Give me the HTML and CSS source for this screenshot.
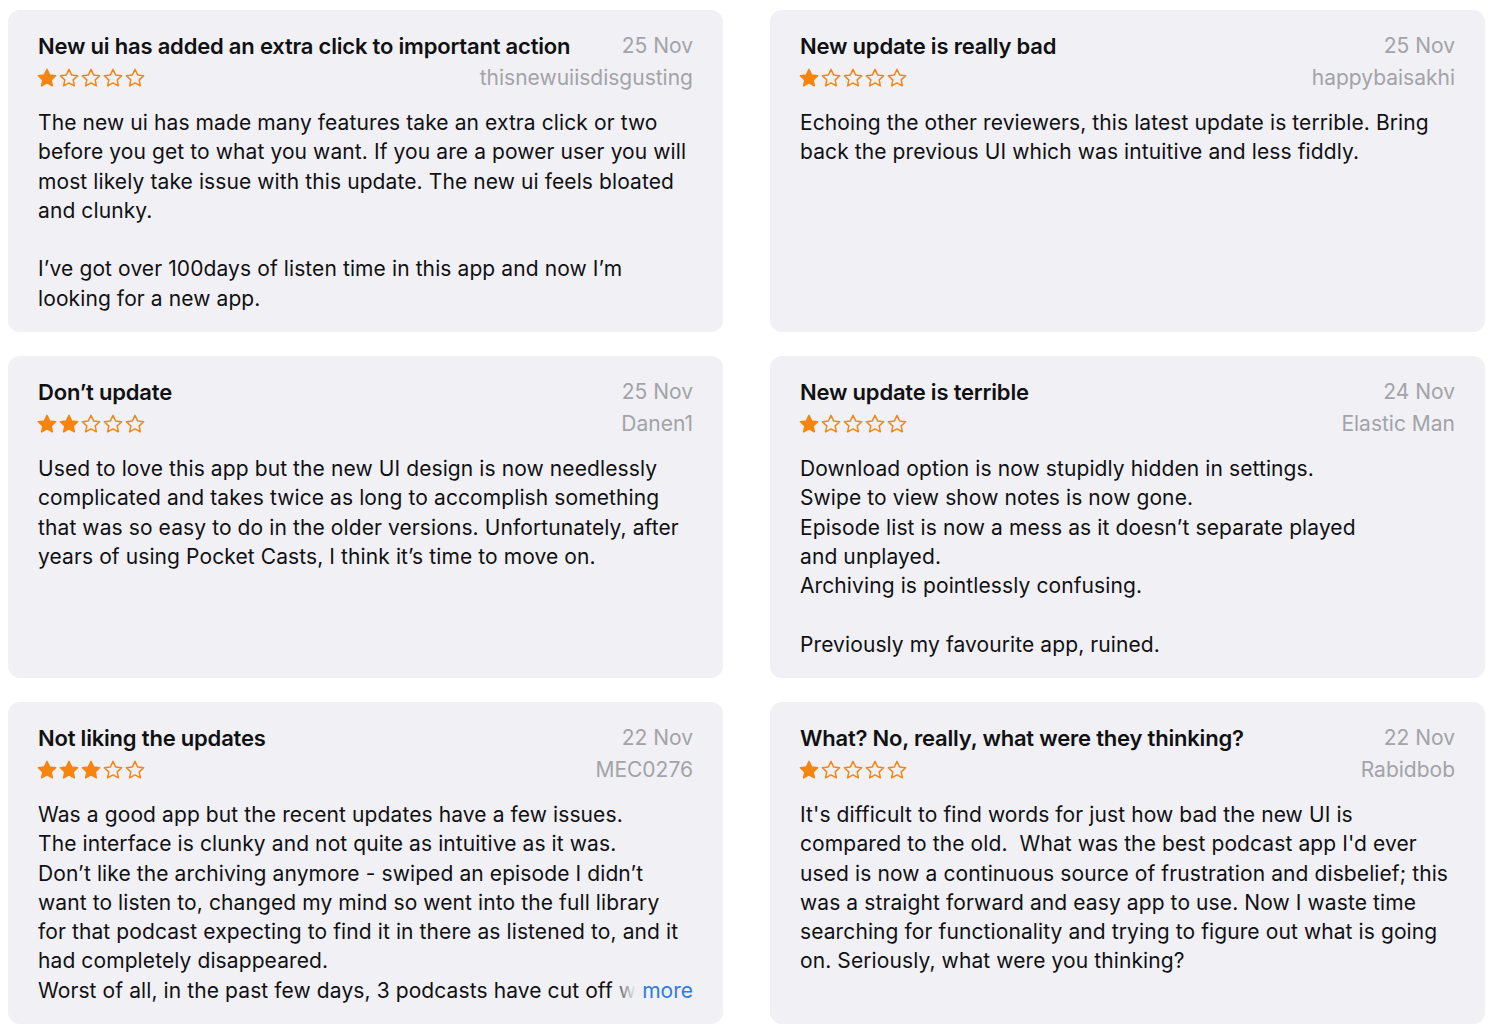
FILE: index.html
```html
<!DOCTYPE html>
<html>
  <head>
    <link rel="stylesheet" href="styles.css">
  </head>
  <body>
    <svg class="defs" width="0" height="0">
      <symbol id="star" viewBox="0 0 24 24">
        <path d="M12 2.6l2.85 6.05 6.6.85-4.85 4.55 1.25 6.55L12 17.4l-5.85 3.2 1.25-6.55L2.55 9.5l6.6-.85z" />
      </symbol>
    </svg>

    <main class="reviews">
      <article class="review">
        <header class="review-head">
          <h2 class="review-title">New ui has added an extra click to important action</h2>
          <span class="review-date">25 Nov</span>
          <div class="stars" data-rating="1"></div>
          <span class="review-author">thisnewuiisdisgusting</span>
        </header>
        <p class="review-body">The new ui has made many features take an extra click or two before you get to what you want. If you are a power user you will most likely take issue with this update. The new ui feels bloated and clunky.<br><br>I’ve got over 100days of listen time in this app and now I’m looking for a new app.</p>
      </article>

      <article class="review">
        <header class="review-head">
          <h2 class="review-title">New update is really bad</h2>
          <span class="review-date">25 Nov</span>
          <div class="stars" data-rating="1"></div>
          <span class="review-author">happybaisakhi</span>
        </header>
        <p class="review-body">Echoing the other reviewers, this latest update is terrible. Bring back the previous UI which was intuitive and less fiddly.</p>
      </article>

      <article class="review">
        <header class="review-head">
          <h2 class="review-title">Don’t update</h2>
          <span class="review-date">25 Nov</span>
          <div class="stars" data-rating="2"></div>
          <span class="review-author">Danen1</span>
        </header>
        <p class="review-body">Used to love this app but the new UI design is now needlessly complicated and takes twice as long to accomplish something that was so easy to do in the older versions. Unfortunately, after years of using Pocket Casts, I think it’s time to move on.</p>
      </article>

      <article class="review">
        <header class="review-head">
          <h2 class="review-title">New update is terrible</h2>
          <span class="review-date">24 Nov</span>
          <div class="stars" data-rating="1"></div>
          <span class="review-author">Elastic Man</span>
        </header>
        <p class="review-body">Download option is now stupidly hidden in settings.<br>Swipe to view show notes is now gone.<br>Episode list is now a mess as it doesn’t separate played<br>and unplayed.<br>Archiving is pointlessly confusing.<br><br>Previously my favourite app, ruined.</p>
      </article>

      <article class="review">
        <header class="review-head">
          <h2 class="review-title">Not liking the updates</h2>
          <span class="review-date">22 Nov</span>
          <div class="stars" data-rating="3"></div>
          <span class="review-author">MEC0276</span>
        </header>
        <div class="review-clamp">
          <p class="review-body">Was a good app but the recent updates have a few issues.<br>The interface is clunky and not quite as intuitive as it was.<br>Don’t like the archiving anymore - swiped an episode I didn’t want to listen to, changed my mind so went into the full library for that podcast expecting to find it in there as listened to, and it had completely disappeared.<br>Worst of all, in the past few days, 3 podcasts have cut off with no warning and I can’t get them back.</p>
          <a class="more" href="#">more</a>
        </div>
      </article>

      <article class="review">
        <header class="review-head">
          <h2 class="review-title">What? No, really, what were they thinking?</h2>
          <span class="review-date">22 Nov</span>
          <div class="stars" data-rating="1"></div>
          <span class="review-author">Rabidbob</span>
        </header>
        <p class="review-body">It's difficult to find words for just how bad the new UI is compared to the old.&nbsp; What was the best podcast app I'd ever used is now a continuous source of frustration and disbelief; this was a straight forward and easy app to use. Now I waste time searching for functionality and trying to figure out what is going on. Seriously, what were you thinking?</p>
      </article>
    </main>

    <script>
      // fill each rating row with five stars, the first n solid
      document.querySelectorAll('.stars').forEach((row) => {
        const rating = parseInt(row.dataset.rating);
        for (let i = 0; i < 5; i++) {
          const svg = document.createElementNS('http://www.w3.org/2000/svg', 'svg');
          svg.setAttribute('class', i < rating ? 'star full' : 'star');
          svg.setAttribute('viewBox', '0 0 24 24');
          const use = document.createElementNS('http://www.w3.org/2000/svg', 'use');
          use.setAttribute('href', '#star');
          svg.appendChild(use);
          row.appendChild(svg);
        }
      });
    </script>
  </body>
</html>
```

FILE: styles.css
```css
body {
  margin: 0;
  padding: 0;
  background-color: #fff;
  font-family: Inter, "Noto Sans", sans-serif;
  color: #111113;
}
.defs {
  position: absolute;
}
.reviews {
  display: grid;
  grid-template-columns: 715px 715px;
  grid-auto-rows: 322px;
  column-gap: 47px;
  row-gap: 24px;
  padding: 10px 0 0 8px;
}
.review {
  background-color: #f0f0f5;
  border-radius: 12px;
  padding: 22px 30px 0 30px;
  overflow: hidden;
}
/* title + date on the first row, stars + author on the second;
   a long title may run under the author column */
.review-head {
  display: grid;
  grid-template-columns: minmax(0, 1fr) auto;
  row-gap: 4px;
  align-items: center;
}
.review-title {
  margin: 0;
  font-size: 22px;
  font-weight: 600;
  line-height: 28px;
  letter-spacing: -0.2px;
  white-space: nowrap;
}
.stars {
  display: flex;
  margin-left: -2px;
}
.star {
  width: 22px;
  height: 22px;
  fill: none;
  stroke: #f6850f;
  stroke-width: 1.6;
  stroke-linejoin: round;
}
.star.full {
  fill: #f6850f;
}
.review-date,
.review-author {
  justify-self: end;
  font-size: 21px;
  line-height: 28px;
  color: #a3a3a8;
  white-space: nowrap;
}
.review-body {
  margin: 16px 0 0 0;
  font-size: 21px;
  line-height: 29.3px;
  letter-spacing: 0.1px;
}
.review-clamp {
  position: relative;
  max-height: calc(16px + 29.3px * 7);
  overflow: hidden;
}
.more {
  position: absolute;
  right: 0;
  top: calc(16px + 29.3px * 6);
  padding-left: 32px;
  line-height: 29.3px;
  font-size: 21px;
  color: #2f7be6;
  text-decoration: none;
  background: linear-gradient(to right, rgba(240, 240, 245, 0), #f0f0f5 26px);
}
```
